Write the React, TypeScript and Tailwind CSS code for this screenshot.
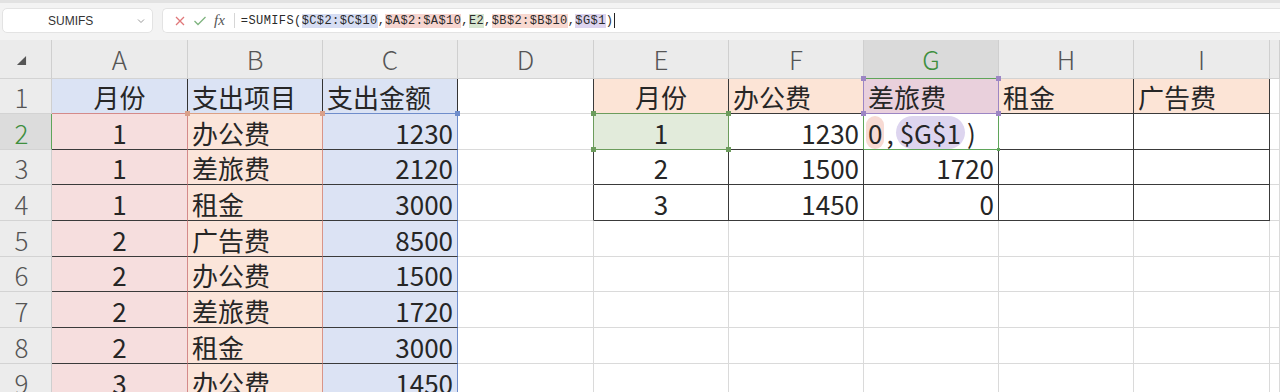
import type { ReactNode } from "react";

type Cell = { t?: ReactNode; cls: string; h?: ReactNode };

const font = { fontFamily: '"Noto Sans CJK SC", "Noto Sans", sans-serif' };

const gridLine = "bg-white border-r-[#dadada] border-b-[#dadada]";
const boxed = "bg-white border-r-[#3a3a3a] border-b-[#3a3a3a]";

function Handle({ pos, color }: { pos: string; color: string }) {
    return <span className={`absolute z-10 h-[5px] w-[5px] ${pos} ${color}`} />;
}

const colLetters = ["A", "B", "C", "D", "E", "F", "G", "H", "I", ""];
const rowHeights = ["h-[35px]", "h-[36px]", "h-[35px]", "h-[36px]", "h-[36px]", "h-[35px]", "h-[36px]", "h-[36px]", "h-[36px]"];

const left = [
    ["1", "办公费", "1230"],
    ["1", "差旅费", "2120"],
    ["1", "租金", "3000"],
    ["2", "广告费", "8500"],
    ["2", "办公费", "1500"],
    ["2", "差旅费", "1720"],
    ["2", "租金", "3000"],
    ["3", "办公费", "1450"],
];

function buildRows(): Cell[][] {
    const rows: Cell[][] = [];
    rows.push([
        {
            t: "月份",
            cls: "bg-[#dbe3f4] border-r-[#333] border-b-[#d48a8a] justify-center",
            h: <Handle pos="-right-[3px] -bottom-[3px]" color="bg-[#d9a08a]" />,
        },
        {
            t: "支出项目",
            cls: "bg-[#dbe3f4] border-r-[#333] border-b-[#dca084]",
            h: <Handle pos="-right-[3px] -bottom-[3px]" color="bg-[#d9a08a]" />,
        },
        {
            t: "支出金额",
            cls: "bg-[#dbe3f4] border-r-[#333] border-b-[#6f8dcb]",
            h: <Handle pos="-right-[3px] -bottom-[3px]" color="bg-[#6f8dcb]" />,
        },
        { cls: "bg-white border-r-[#3a3a3a] border-b-[#dadada]" },
        {
            t: "月份",
            cls: "bg-[#fce4d6] border-r-[#3a3a3a] border-b-[#6c9c5c] justify-center",
            h: (
                <>
                    <Handle pos="-left-[3px] -bottom-[3px]" color="bg-[#6c9c5c]" />
                    <Handle pos="-right-[3px] -bottom-[3px]" color="bg-[#6c9c5c]" />
                </>
            ),
        },
        { t: "办公费", cls: "bg-[#fce4d6] border-r-[#9c86c4] border-b-[#3a3a3a]" },
        {
            t: "差旅费",
            cls: "bg-[#e9d0dc] border-r-[#9c86c4] border-b-[#9c86c4]",
            h: (
                <>
                    <Handle pos="-left-[3px] -top-[3px]" color="bg-[#9c86c4]" />
                    <Handle pos="-right-[3px] -top-[3px]" color="bg-[#9c86c4]" />
                    <Handle pos="-left-[3px] -bottom-[3px]" color="bg-[#9c86c4]" />
                    <Handle pos="-right-[3px] -bottom-[3px]" color="bg-[#9c86c4]" />
                </>
            ),
        },
        { t: "租金", cls: "bg-[#fce4d6] border-r-[#3a3a3a] border-b-[#3a3a3a]" },
        { t: "广告费", cls: "bg-[#fce4d6] border-r-[#3a3a3a] border-b-[#3a3a3a]" },
        { cls: gridLine },
    ]);

    const right: Cell[][] = [
        [
            { cls: "bg-white border-r-[#6c9c5c] border-b-[#dadada]" },
            {
                t: "1",
                cls: "bg-[#e2ebdb] border-r-[#6c9c5c] border-b-[#6c9c5c] justify-center",
                h: (
                    <>
                        <Handle pos="-left-[3px] -bottom-[3px]" color="bg-[#6c9c5c]" />
                        <Handle pos="-right-[3px] -bottom-[3px]" color="bg-[#6c9c5c]" />
                    </>
                ),
            },
            { t: "1230", cls: "bg-white border-r-[#5fa55a] border-b-[#3a3a3a] justify-end" },
            {
                t: (
                    <span className="flex items-end">
                        <span className="rounded-full bg-[#f7dad3] px-[2px]">0</span>
                        <span className="px-[2px]">,</span>
                        <span className="rounded-full bg-[#ddd5ef] px-[4px]">$G$1</span>
                        <span className="pl-[2px]">)</span>
                    </span>
                ),
                cls: "bg-white border-r-[#5fa55a] border-b-[#5fa55a] !px-[2px]",
                h: <Handle pos="-right-[2px] -bottom-[2px] !h-[3px] !w-[3px]" color="bg-[#5fa55a]" />,
            },
            { cls: boxed },
            { cls: boxed },
            { cls: gridLine },
        ],
        [
            { cls: "bg-white border-r-[#3a3a3a] border-b-[#dadada]" },
            { t: "2", cls: `${boxed} justify-center` },
            { t: "1500", cls: `${boxed} justify-end` },
            { t: "1720", cls: `${boxed} justify-end` },
            { cls: boxed },
            { cls: boxed },
            { cls: gridLine },
        ],
        [
            { cls: "bg-white border-r-[#3a3a3a] border-b-[#dadada]" },
            { t: "3", cls: `${boxed} justify-center` },
            { t: "1450", cls: `${boxed} justify-end` },
            { t: "0", cls: `${boxed} justify-end` },
            { cls: boxed },
            { cls: boxed },
            { cls: gridLine },
        ],
    ];

    left.forEach((r, i) => {
        const rest: Cell[] =
            right[i] ??
            Array.from({ length: 7 }, () => ({ cls: gridLine }));
        rows.push([
            { t: r[0], cls: "bg-[#f6dede] border-r-[#d48a8a] border-b-[#3a3a3a] justify-center" },
            { t: r[1], cls: "bg-[#fbe5da] border-r-[#d99488] border-b-[#3a3a3a]" },
            { t: r[2], cls: "bg-[#dce3f4] border-r-[#6f8dcb] border-b-[#3a3a3a] justify-end" },
            ...rest,
        ]);
    });
    return rows;
}

function FormulaBar() {
    return (
        <div className="flex h-[40px] items-start gap-[9px] border-t-[3px] border-t-[#e2e2e2] bg-[#f3f3f3] pt-[5px] pl-[2px]">
            <div className="flex h-[25px] w-[151px] items-center justify-between rounded-[5px] border border-[#e3e3e3] bg-white pr-[6px] pl-[45px]">
                <span className="text-[12px] text-[#333]" style={{ fontFamily: '"Liberation Sans", sans-serif' }}>
                    SUMIFS
                </span>
                <svg width="10" height="10" viewBox="0 0 10 10" className="text-[#999]">
                    <path d="M2 3.5 L5 6.5 L8 3.5" fill="none" stroke="currentColor" strokeWidth="1" />
                </svg>
            </div>
            <div className="flex h-[25px] flex-1 items-center rounded-l-[5px] border border-r-0 border-[#e3e3e3] bg-white pl-[11px]">
                <svg width="12" height="12" viewBox="0 0 12 12">
                    <path d="M2 2 L10 10 M10 2 L2 10" stroke="#e0787a" strokeWidth="1.3" />
                </svg>
                <svg width="14" height="12" viewBox="0 0 14 12" className="ml-[7px]">
                    <path d="M1.5 6 L5 9.5 L12.5 2" fill="none" stroke="#7fb47f" strokeWidth="1.3" />
                </svg>
                <span
                    className="ml-[7px] text-[15px] italic text-[#555]"
                    style={{ fontFamily: '"Liberation Serif", serif' }}
                >
                    fx
                </span>
                <span className="ml-[9px] h-[15px] w-px bg-[#d6d6d6]" />
                <span
                    className="ml-[6px] whitespace-pre text-[12px] tracking-[0.4px] text-[#2a2a2a]"
                    style={{ fontFamily: '"Liberation Mono", monospace' }}
                >
                    =SUMIFS(
                    <span className="bg-[#d6ddf3]">$C$2:$C$10</span>,
                    <span className="bg-[#f6d4cf]">$A$2:$A$10</span>,
                    <span className="bg-[#d8e6d1]">E2</span>,
                    <span className="bg-[#f8d8d0]">$B$2:$B$10</span>,
                    <span className="bg-[#ddd4ef]">$G$1</span>)
                </span>
                <span className="ml-[1px] h-[15px] w-px bg-[#222]" />
            </div>
        </div>
    );
}

export default function App() {
    const rows = buildRows();
    return (
        <div className="h-[392px] w-[1280px] overflow-hidden bg-white" style={font}>
            <FormulaBar />
            <div className="grid grid-cols-[52px_136px_135px_135px_136px_135px_135px_135px_135px_136px_1fr]">
                <div className="flex h-[39px] items-center justify-center border-r border-b border-r-[#cfcfcf] border-b-[#d3d3d3] bg-[#ebebeb] pr-[8px]">
                    <svg width="11" height="11" viewBox="0 0 12 12" className="mt-[2px]">
                        <polygon points="11,1 11,11 1,11" fill="#555" />
                    </svg>
                </div>
                {colLetters.map((c, i) => (
                    <div
                        key={c + i}
                        className={
                            c === "G"
                                ? "flex h-[39px] items-end justify-center border-r border-b border-r-[#cfcfcf] border-b-[#5fa55a] bg-[#dadada] pb-[2px] text-[26px] leading-[34px] font-light text-[#3f8f3f]"
                                : "flex h-[39px] items-end justify-center border-r border-b border-r-[#cfcfcf] border-b-[#d3d3d3] bg-[#ebebeb] pb-[2px] text-[26px] leading-[34px] font-light text-[#555]"
                        }
                    >
                        {c}
                    </div>
                ))}
                {rows.map((row, ri) => (
                    <div key={ri} className="contents">
                        <div
                            className={
                                ri === 1
                                    ? `flex ${rowHeights[ri]} items-end justify-center border-r border-b border-r-[#5fa55a] border-b-[#d3d3d3] bg-[#dcdcdc] pr-[8px] text-[26px] leading-[32px] font-light text-[#3f8f3f]`
                                    : `flex ${rowHeights[ri]} items-end justify-center border-r border-b border-r-[#cfcfcf] border-b-[#d3d3d3] bg-[#ececec] pr-[8px] text-[26px] leading-[32px] font-light text-[#555]`
                            }
                        >
                            {ri + 1}
                        </div>
                        {row.map((cell, ci) => (
                            <div
                                key={ci}
                                className={`relative flex ${rowHeights[ri]} items-end border-r border-b px-[4px] text-[26px] leading-[33px] whitespace-nowrap text-[#262626] ${cell.cls}`}
                            >
                                {cell.t}
                                {cell.h}
                            </div>
                        ))}
                    </div>
                ))}
            </div>
        </div>
    );
}
